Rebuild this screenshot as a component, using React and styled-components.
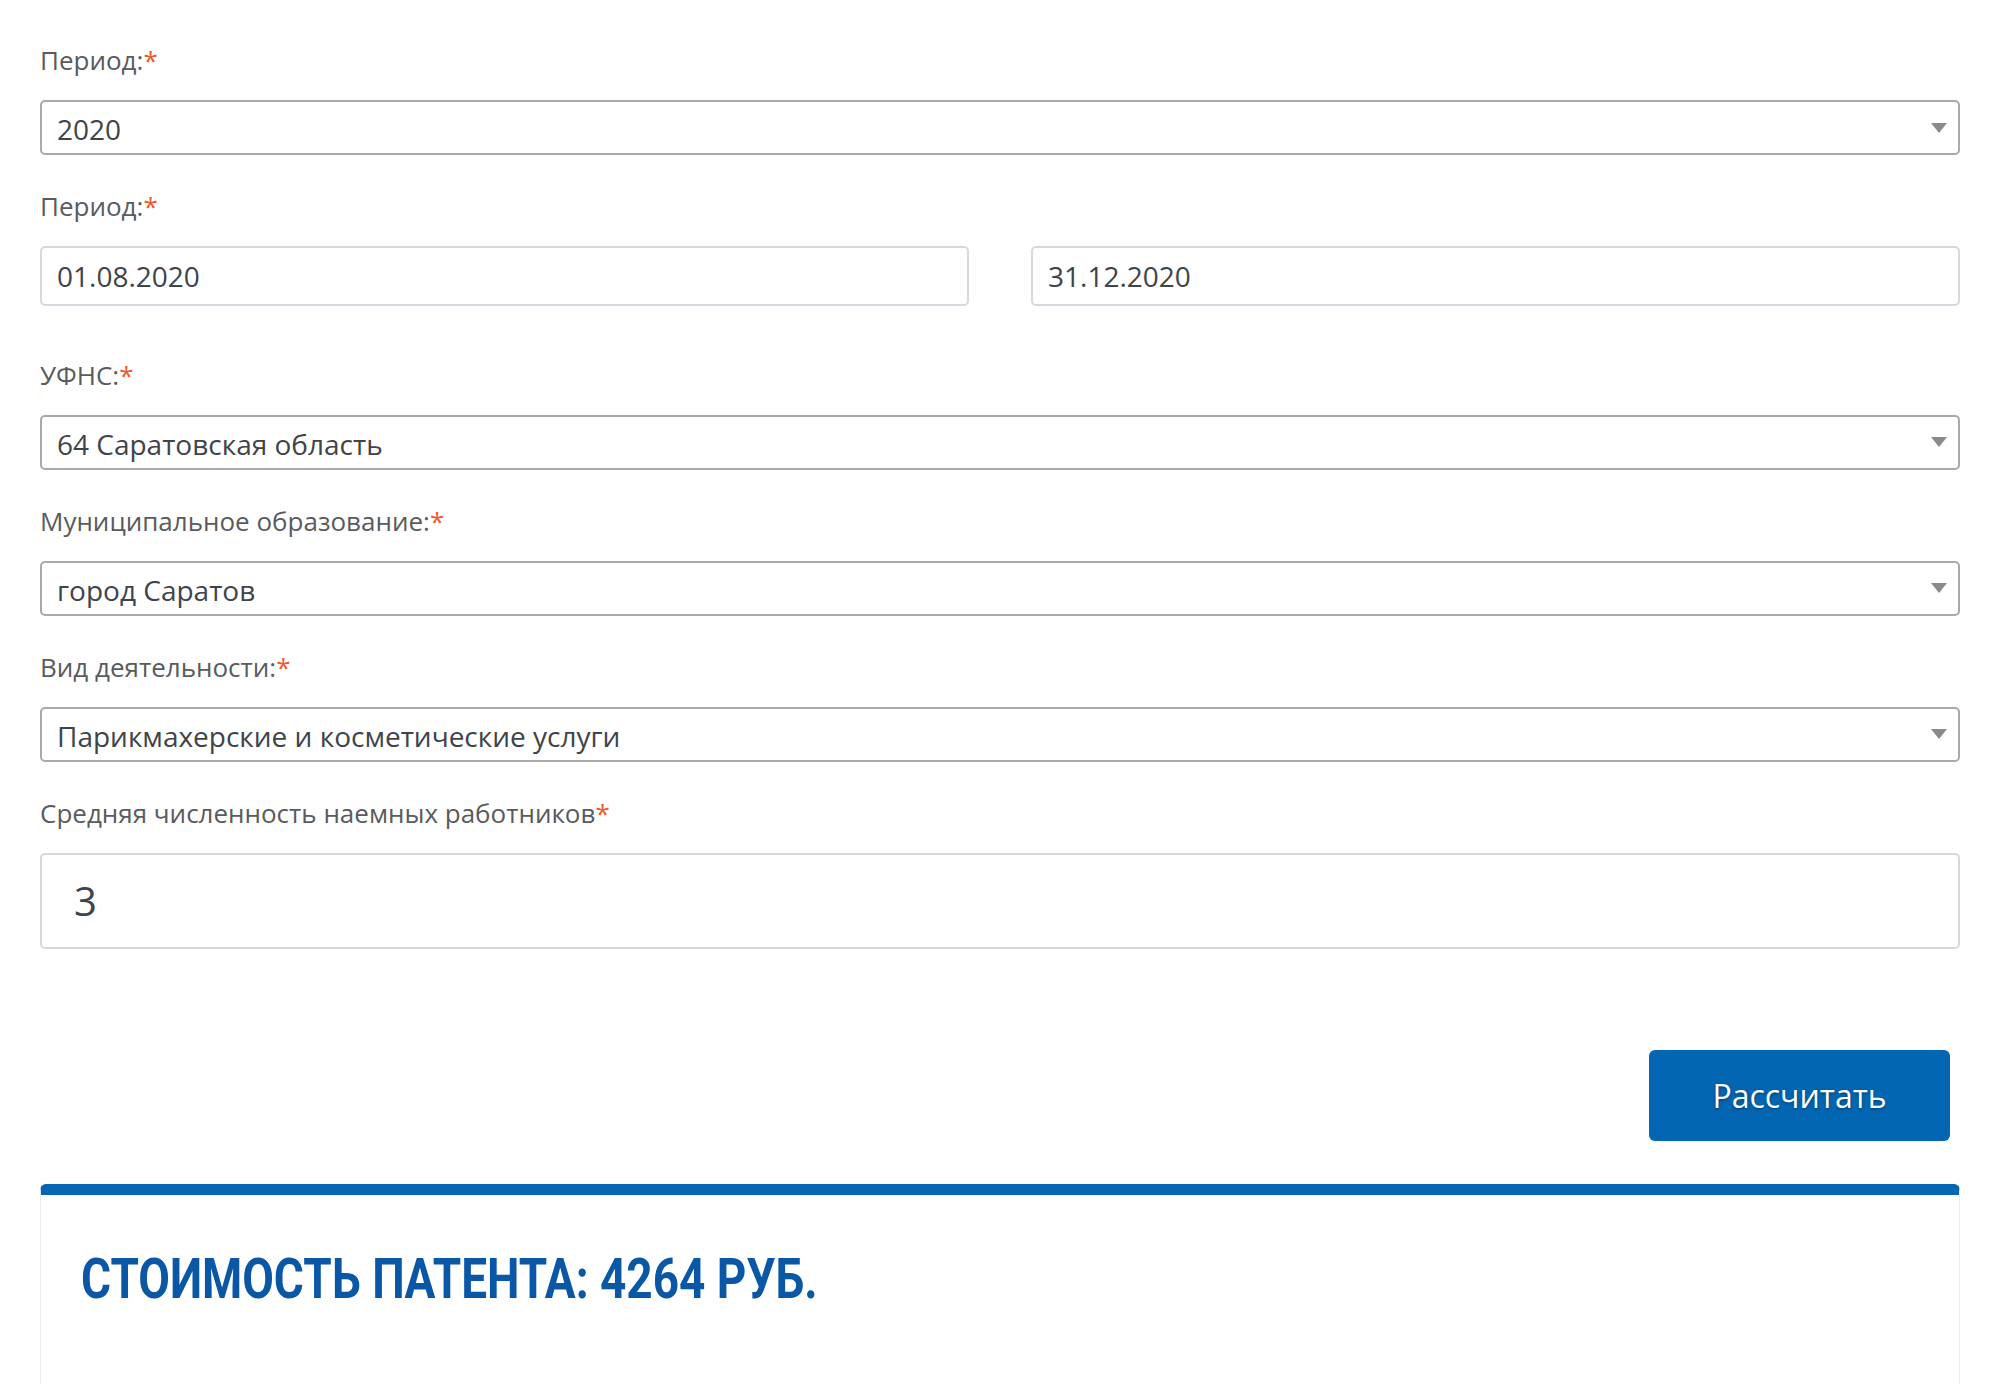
import styled, { createGlobalStyle } from 'styled-components';

const GlobalStyle = createGlobalStyle`
  html, body {
    margin: 0;
    padding: 0;
    background: #ffffff;
  }
  body {
    font-family: "Open Sans", "Noto Sans", sans-serif;
    color: #444a50;
  }
  * {
    box-sizing: border-box;
  }
`;

const Page = styled.div`
  width: 2000px;
  padding: 42px 40px 0;
  display: flex;
  flex-direction: column;
`;

const Form = styled.form`
  display: flex;
  flex-direction: column;
  gap: 33px;
`;

const Field = styled.div`
  display: flex;
  flex-direction: column;
  margin-bottom: ${(p) => (p.$extra ? `${p.$extra}px` : '0')};
`;

const Label = styled.label`
  font-size: 26px;
  line-height: 36px;
  color: #595b5e;
  margin-bottom: 22px;
`;

const Star = styled.span`
  color: #f0582a;
`;

const SelectBox = styled.div`
  height: 55px;
  display: flex;
  align-items: center;
  justify-content: space-between;
  padding: 3px 11px 0 15px;
  border: 2px solid #a9a9a9;
  border-radius: 5px;
  background: #fff;
  font-size: 28px;
  color: #3f444a;
  cursor: pointer;
`;

const Arrow = styled.svg`
  width: 16px;
  height: 10px;
  margin-top: -3px;
  flex-shrink: 0;
`;

const TextInput = styled.input`
  width: 100%;
  height: ${(p) => (p.$big ? '96px' : '60px')};
  padding: ${(p) => (p.$big ? '0 0 0 32px' : '0 0 0 15px')};
  border: 2px solid #d3d9df;
  border-radius: 5px;
  font-family: "Open Sans", "Noto Sans", sans-serif;
  font-size: ${(p) => (p.$big ? '40px' : '28px')};
  color: #3f444a;
  background: #fff;
  outline: none;
`;

const DateRow = styled.div`
  display: grid;
  grid-template-columns: 1fr 1fr;
  gap: 62px;
`;

const Actions = styled.div`
  display: flex;
  justify-content: flex-end;
  padding: 101px 10px 0 0;
`;

const SubmitButton = styled.button`
  width: 301px;
  height: 91px;
  border: none;
  border-radius: 6px;
  background: #0366b3;
  color: #fff;
  font-family: "Open Sans", "Noto Sans", sans-serif;
  font-size: 32px;
  text-shadow: 0 1px 3px rgba(0, 0, 0, 0.45);
  cursor: pointer;
`;

const ResultCard = styled.section`
  margin-top: 43px;
  min-height: 240px;
  background: #fff;
  border: 1px solid #eceff2;
  border-top: 11px solid #0366b3;
  border-radius: 6px 6px 0 0;
  padding: 57px 40px 0;
`;

// the original uses a condensed DIN face; Roboto Bold squeezed horizontally stands in for it
const ResultTitle = styled.h2`
  display: inline-block;
  margin: 0;
  font-family: Roboto, "Liberation Sans", sans-serif;
  font-weight: 700;
  font-size: 56px;
  line-height: 55px;
  color: #0a57a6;
  text-transform: uppercase;
  white-space: nowrap;
  transform: scaleX(0.82);
  transform-origin: left center;
`;

function Caret() {
  return (
    <Arrow viewBox="0 0 16 10">
      <polygon points="0,0 16,0 8,10" fill="#8a8a8a" />
    </Arrow>
  );
}

function Select({ value }) {
  return (
    <SelectBox>
      <span>{value}</span>
      <Caret />
    </SelectBox>
  );
}

function FieldLabel({ children }) {
  return (
    <Label>
      {children}
      <Star>*</Star>
    </Label>
  );
}

export default function App() {
  return (
    <>
      <GlobalStyle />
      <Page>
        <Form onSubmit={(e) => e.preventDefault()}>
          <Field>
            <FieldLabel>Период:</FieldLabel>
            <Select value="2020" />
          </Field>

          <Field $extra={17.5}>
            <FieldLabel>Период:</FieldLabel>
            <DateRow>
              <TextInput readOnly value="01.08.2020" />
              <TextInput readOnly value="31.12.2020" />
            </DateRow>
          </Field>

          <Field>
            <FieldLabel>УФНС:</FieldLabel>
            <Select value="64 Саратовская область" />
          </Field>

          <Field>
            <FieldLabel>Муниципальное образование:</FieldLabel>
            <Select value="город Саратов" />
          </Field>

          <Field>
            <FieldLabel>Вид деятельности:</FieldLabel>
            <Select value="Парикмахерские и косметические услуги" />
          </Field>

          <Field>
            <FieldLabel>Средняя численность наемных работников</FieldLabel>
            <TextInput $big readOnly value="3" />
          </Field>
        </Form>

        <Actions>
          <SubmitButton type="button">Рассчитать</SubmitButton>
        </Actions>

        <ResultCard>
          <ResultTitle>Стоимость патента: 4264 руб.</ResultTitle>
        </ResultCard>
      </Page>
    </>
  );
}
